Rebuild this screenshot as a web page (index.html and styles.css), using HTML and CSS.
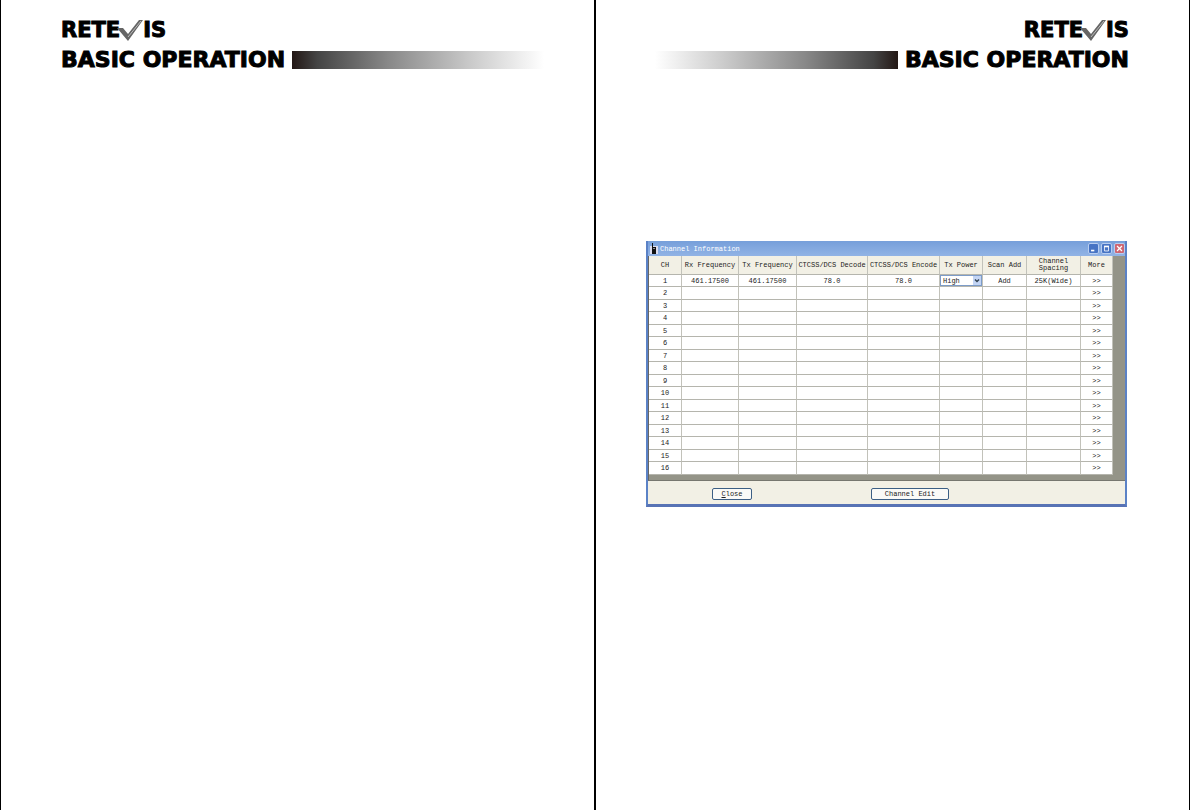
FILE: index.html
```html
<!DOCTYPE html>
<html lang="en">
<head>
  <meta charset="UTF-8" />
  <meta name="viewport" content="width=device-width, initial-scale=1.0"/>
  <title>Retevis - Basic Operation</title>
  <link rel="stylesheet" href="styles.css">
</head>
<body>
  <main class="spread">
    <section class="page">
      <header class="page-header">
        <div class="logo">
          <span>RETE</span>
          <svg class="check" viewBox="0 0 26 21" aria-label="V"><path fill="#666" d="M0 8h6l5 6L22 0h4L11 21z"/><path stroke="#bbb" d="M11 17 24 1"/></svg>
          <span>IS</span>
        </div>
        <div class="heading">
          <h1>BASIC OPERATION</h1>
          <div class="band"></div>
        </div>
      </header>
    </section>

    <section class="page page-right">
      <header class="page-header">
        <div class="logo">
          <span>RETE</span>
          <svg class="check" viewBox="0 0 26 21" aria-label="V"><path fill="#666" d="M0 8h6l5 6L22 0h4L11 21z"/><path stroke="#bbb" d="M11 17 24 1"/></svg>
          <span>IS</span>
        </div>
        <div class="heading">
          <div class="band"></div>
          <h1>BASIC OPERATION</h1>
        </div>
      </header>

      <div class="window">
        <div class="title-bar">
          <svg class="radio" viewBox="0 0 8 11"><path fill="#dde" d="M0 3h8v8H0z"/><path fill="#111" d="M2 0h1v4h3v7H2z"/><path fill="#889" d="M3 5h2v1H3z"/></svg>
          <span class="title">Channel Information</span>
          <button class="tool" aria-label="Minimize"><svg viewBox="0 0 10 11"><path fill="#fff" d="M2 7h4v2H2z"/></svg></button>
          <button class="tool" aria-label="Maximize"><svg viewBox="0 0 10 11"><path fill="none" stroke="#fff" d="M2.500 3v5.500h5V3"/><path fill="#fff" d="M2 2h6v2H2z"/></svg></button>
          <button class="tool tool-close" aria-label="Close window"><svg viewBox="0 0 10 11"><path stroke="#fff" stroke-width="1.500" d="m2 2.500 6 6m0-6-6 6"/></svg></button>
        </div>
        <div class="grid">
          <table>
            <colgroup>
              <col class="c-ch"><col class="c-rx"><col class="c-tx"><col class="c-dec"><col class="c-enc"><col class="c-pow"><col class="c-scan"><col class="c-space"><col class="c-more">
            </colgroup>
            <thead>
              <tr><th>CH</th><th>Rx Frequency</th><th>Tx Frequency</th><th>CTCSS/DCS Decode</th><th>CTCSS/DCS Encode</th><th>Tx Power</th><th>Scan Add</th><th>Channel<br>Spacing</th><th>More</th></tr>
            </thead>
            <tbody>
              <tr><td>1</td><td>461.17500</td><td>461.17500</td><td>78.0</td><td>78.0</td>
                <td class="power"><div class="select-box"><select aria-label="Tx Power"><option>High</option><option>Low</option></select><svg viewBox="0 0 8 8"><path fill="none" stroke="#345" stroke-width="1.500" d="m2 3 2 2 2-2"/></svg></div></td>
                <td>Add</td><td>25K(Wide)</td><td>&gt;&gt;</td></tr>
              <tr><td>2</td><td></td><td></td><td></td><td></td><td></td><td></td><td></td><td>&gt;&gt;</td></tr>
              <tr><td>3</td><td></td><td></td><td></td><td></td><td></td><td></td><td></td><td>&gt;&gt;</td></tr>
              <tr><td>4</td><td></td><td></td><td></td><td></td><td></td><td></td><td></td><td>&gt;&gt;</td></tr>
              <tr><td>5</td><td></td><td></td><td></td><td></td><td></td><td></td><td></td><td>&gt;&gt;</td></tr>
              <tr><td>6</td><td></td><td></td><td></td><td></td><td></td><td></td><td></td><td>&gt;&gt;</td></tr>
              <tr><td>7</td><td></td><td></td><td></td><td></td><td></td><td></td><td></td><td>&gt;&gt;</td></tr>
              <tr><td>8</td><td></td><td></td><td></td><td></td><td></td><td></td><td></td><td>&gt;&gt;</td></tr>
              <tr><td>9</td><td></td><td></td><td></td><td></td><td></td><td></td><td></td><td>&gt;&gt;</td></tr>
              <tr><td>10</td><td></td><td></td><td></td><td></td><td></td><td></td><td></td><td>&gt;&gt;</td></tr>
              <tr><td>11</td><td></td><td></td><td></td><td></td><td></td><td></td><td></td><td>&gt;&gt;</td></tr>
              <tr><td>12</td><td></td><td></td><td></td><td></td><td></td><td></td><td></td><td>&gt;&gt;</td></tr>
              <tr><td>13</td><td></td><td></td><td></td><td></td><td></td><td></td><td></td><td>&gt;&gt;</td></tr>
              <tr><td>14</td><td></td><td></td><td></td><td></td><td></td><td></td><td></td><td>&gt;&gt;</td></tr>
              <tr><td>15</td><td></td><td></td><td></td><td></td><td></td><td></td><td></td><td>&gt;&gt;</td></tr>
              <tr><td>16</td><td></td><td></td><td></td><td></td><td></td><td></td><td></td><td>&gt;&gt;</td></tr>
            </tbody>
          </table>
        </div>
        <div class="actions">
          <button class="btn"><u>C</u>lose</button>
          <button class="btn btn-wide">Channel Edit</button>
        </div>
      </div>
    </section>
  </main>
</body>
</html>
```

FILE: styles.css
```css
/* Base and layout */
* { box-sizing:border-box; }
body { margin:0; background:#fff; color:#222; font-family:"Liberation Mono",monospace; font-size:7px; line-height:8px; }
button, select { font:inherit; color:inherit; }
.spread { display:flex; min-height:100vh; border-left:1px solid #000; border-right:1px solid #000; }
.page { flex:1; min-width:0; padding:20px 50px 0 60px; }
.page-right { border-left:2px solid #000; padding:20px 60px 0 50px; }

/* Page header */
.logo { display:flex; align-items:center; height:21px; color:#000; font-family:"DejaVu Sans",sans-serif; font-size:21px; line-height:21px; font-weight:bold; -webkit-text-stroke:1px #000; }
.check { width:26px; height:21px; margin:0 0 0 -3px; }
.page-right .logo { justify-content:flex-end; }
.heading { display:flex; align-items:center; gap:7px; height:18px; margin-top:10px; }
.heading h1 { margin:0; color:#000; font-family:"DejaVu Sans",sans-serif; font-size:22px; line-height:18px; font-weight:bold; white-space:nowrap; -webkit-text-stroke:1px #000; }
.band { flex:1; height:18px; background:linear-gradient(to right, #231815, #444 10%, #888 38%, #ccc 72%, #fff); }
.page-right .band { background:linear-gradient(to left, #231815, #444 10%, #888 38%, #ccc 72%, #fff); margin-left:9px; }

/* Program window */
.window { margin:172px 2px 0 0; background:#f2f0e5; border:2px solid #5b82c6; border-top:0; border-bottom:3px solid #5873b5; }
.title-bar { display:flex; align-items:center; gap:2px; height:15px; background:linear-gradient(#769fda, #91b3e5); }
.radio { width:8px; height:11px; margin-left:2px; }
.title { flex:1; color:#fff; }
.tool { width:11px; height:11px; padding:0; border:1px solid #b7cdf0; border-radius:2px; background:#4774c4; }
.tool svg { display:block; width:100%; height:100%; }
.tool-close { background:#cf6672; }

/* Channel table */
.grid { padding:0 12px 5px 0; background:#949488; border-left:1px solid #666; border-bottom:1px solid #77776f; }
table { width:100%; table-layout:fixed; border-collapse:separate; border-spacing:0; background:#fff; text-align:center; }
th, td { padding:0; border-right:1px solid #c2c2ba; border-bottom:1px solid #b5b5ad; white-space:nowrap; }
th { height:19px; background:#f2f0e5; font-weight:normal; line-height:7px; }
td { height:12px; }
tbody tr:nth-child(even) td { height:13px; }
.c-ch { width:33px; }
.c-rx { width:57px; }
.c-tx { width:58px; }
.c-dec { width:71px; }
.c-enc { width:72px; }
.c-pow { width:43px; }
.c-scan { width:44px; }
.c-space { width:54px; }
.c-more { width:32px; }
.select-box { display:flex; height:11px; border:1px solid #7d9cc8; }
.select-box select { flex:1; min-width:0; padding:0 0 0 2px; border:0; background:#fff; appearance:none; }
.select-box svg { width:8px; height:9px; background:#c3d5f5; pointer-events:none; }

/* Bottom buttons */
.actions { display:flex; gap:119px; padding:7px 64px 4px; }
.btn { width:40px; height:12px; padding:0; border:1px solid #3c5f85; border-radius:2px; background:#fafaf7; line-height:10px; }
.btn-wide { width:78px; }
```
